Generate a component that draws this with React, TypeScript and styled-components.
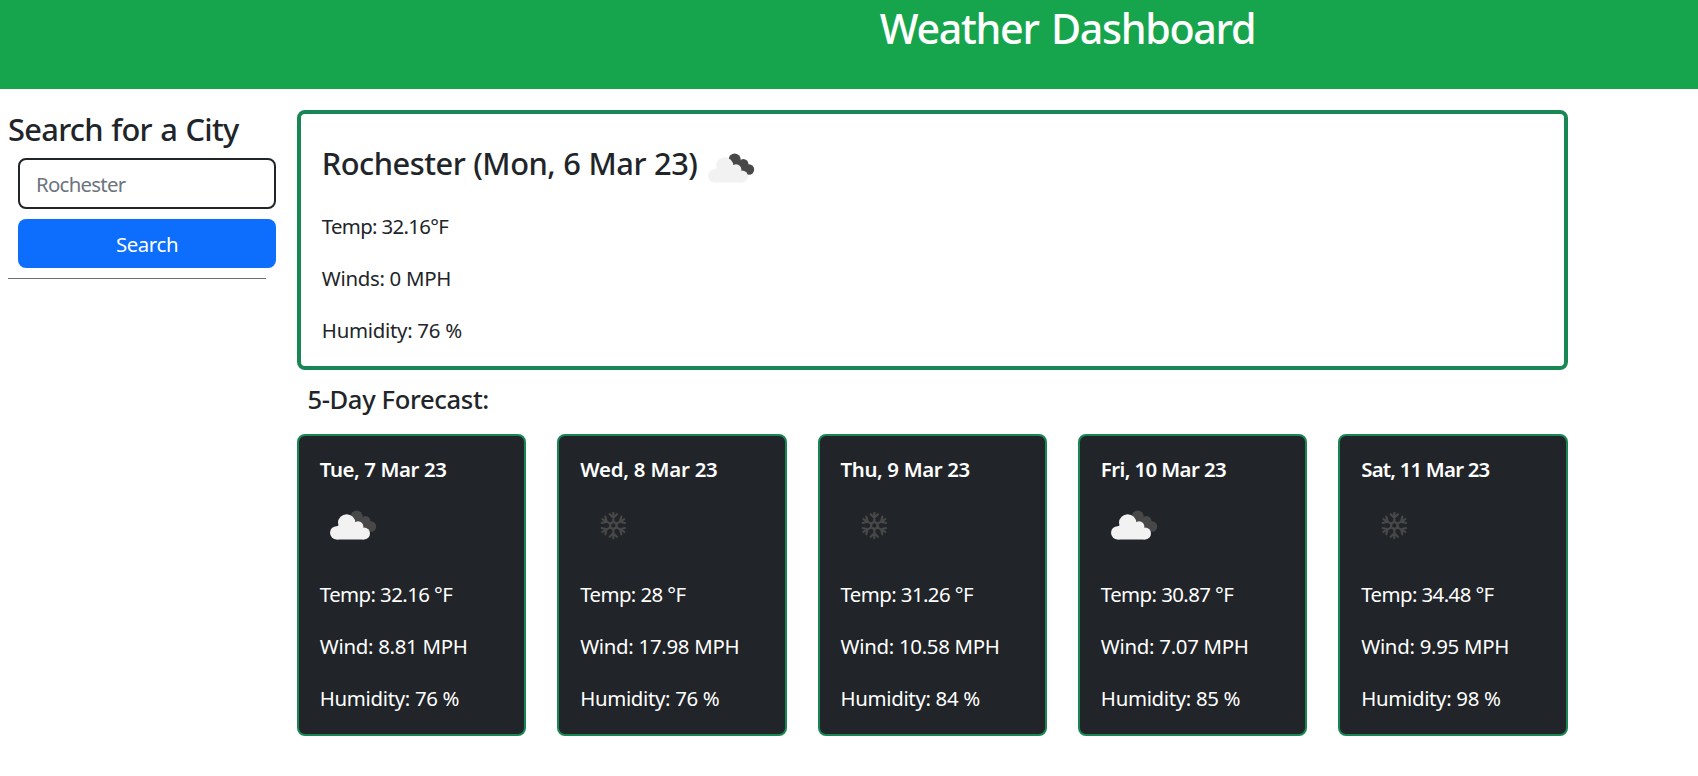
import React from "react";
import styled, { createGlobalStyle } from "styled-components";

const GlobalStyle = createGlobalStyle`
  *, *::before, *::after { box-sizing: border-box; }
  body {
    margin: 0;
    background: #fff;
    color: #212529;
    font-family: "Noto Sans", "Open Sans", sans-serif;
    font-size: 20.4px;
    line-height: 31.2px;
  }
`;

const Header = styled.header`
  height: 89px;
  background: #16a54d;
  color: #fff;
  display: flex;
  justify-content: center;
  padding-left: 437px;
`;

const Title = styled.h1`
  margin: 3px 0 0;
  font-size: 41.2px;
  font-weight: 540;
  line-height: 50px;
  letter-spacing: -1.3px;
  word-spacing: 3px;
`;

const Layout = styled.div`
  display: grid;
  grid-template-columns: 268px 1270.6px;
  column-gap: 21px;
  padding: 21px 0 0 8px;
`;

const Sidebar = styled.aside``;

const SearchTitle = styled.h4`
  margin: 0;
  padding-top: 1px;
  height: 48px;
  font-size: 30.8px;
  font-weight: 500;
  line-height: 37.4px;
  letter-spacing: -0.7px;
  word-spacing: 1px;
`;

const SearchForm = styled.form`
  display: flex;
  flex-direction: column;
  gap: 10px;
  padding-left: 10px;
`;

const CityInput = styled.input`
  height: 51px;
  padding: 0 16px;
  border: 2px solid #212529;
  border-radius: 8px;
  font: inherit;
  letter-spacing: -0.72px;
  background: #fff;
  outline: none;
  &::placeholder { color: #6c757d; opacity: 1; }
`;

const SearchButton = styled.button`
  height: 49px;
  padding: 2px 0 0;
  border: 0;
  border-radius: 8px;
  background: #0d6efd;
  color: #fff;
  font: inherit;
  letter-spacing: -0.39px;
`;

const Divider = styled.hr`
  width: 258px;
  margin: 10px 0 0;
  border: 0;
  border-top: 1px solid #6c6e70;
`;

const Current = styled.section`
  height: 260px;
  padding: 21.5px 20.8px 0;
  border: 4px solid #198754;
  border-radius: 8px;
`;

const CurrentHead = styled.div`
  display: flex;
  align-items: center;
  height: 65px;
  margin-bottom: 10.4px;
`;

const CityName = styled.h4`
  margin: 0;
  padding-bottom: 8px;
  width: 376.5px;
  font-size: 30.8px;
  font-weight: 500;
  line-height: 37.4px;
  letter-spacing: -0.5px;
  word-spacing: 0.6px;
  white-space: nowrap;
`;

const Reading = styled.p<{ $tracking: number }>`
  margin: 0 0 20.8px;
  letter-spacing: ${(p) => p.$tracking}px;
  white-space: nowrap;
`;

const ForecastTitle = styled.h5`
  margin: 13.6px 0 19.2px;
  padding-left: 10.4px;
  font-size: 25.6px;
  font-weight: 500;
  line-height: 31.2px;
  letter-spacing: -0.36px;
`;

const ForecastRow = styled.div`
  display: grid;
  grid-template-columns: repeat(5, 1fr);
  column-gap: 31.2px;
`;

const DayCard = styled.article`
  height: 302px;
  padding: 21px 20.8px 0;
  border: 2px solid #198754;
  border-radius: 8px;
  background: #212529;
  color: #fff;
`;

const DayName = styled.h6<{ $tracking: number }>`
  margin: 0 0 11px;
  font-size: 20.4px;
  font-weight: 600;
  line-height: 25px;
  letter-spacing: ${(p) => p.$tracking}px;
  white-space: nowrap;
`;

const Icon = styled.svg`
  display: block;
  flex: none;
  width: 65px;
  height: 65px;
`;

const DayIcon = styled.div`
  margin-bottom: 21px;
`;

const Clouds = () => (
  <Icon viewBox="30 7.5 195 195">
    <g fill="#484848">
      <circle cx="140" cy="78" r="18" />
      <circle cx="166" cy="92" r="15.5" />
      <circle cx="183" cy="108" r="15.5" />
      <path d="M140 78 166 92 183 108 172 122 140 100z" />
    </g>
    <g fill="#f2f2f2">
      <circle cx="80" cy="127" r="20" />
      <circle cx="110" cy="97" r="26" />
      <circle cx="144" cy="108" r="16" />
      <circle cx="162" cy="129" r="18" />
      <path d="M80 147V108L110 90 144 108 162 120V147z" />
    </g>
  </Icon>
);

const Snow = () => (
  <Icon viewBox="30 7.5 195 195">
    <g fill="none" stroke="#484848" strokeWidth="6.5" strokeLinecap="round">
      {[0, 60, 120, 180, 240, 300].map((angle) => (
        <path key={angle} transform={`rotate(${angle} 130 105)`} d="M130 94V67M119 71 130 82 141 71M123 98 130 94 137 98" />
      ))}
    </g>
  </Icon>
);

type Day = {
  name: string;
  tracking: number;
  sky: "clouds" | "snow";
  temp: string;
  wind: string;
  humidity: string;
};

const days: Day[] = [
  { name: "Tue, 7 Mar 23", tracking: -0.4, sky: "clouds", temp: "32.16", wind: "8.81", humidity: "76" },
  { name: "Wed, 8 Mar 23", tracking: -0.2, sky: "snow", temp: "28", wind: "17.98", humidity: "76" },
  { name: "Thu, 9 Mar 23", tracking: -0.35, sky: "snow", temp: "31.26", wind: "10.58", humidity: "84" },
  { name: "Fri, 10 Mar 23", tracking: -0.6, sky: "clouds", temp: "30.87", wind: "7.07", humidity: "85" },
  { name: "Sat, 11 Mar 23", tracking: -0.8, sky: "snow", temp: "34.48", wind: "9.95", humidity: "98" },
];

export default function App() {
  return (
    <>
      <GlobalStyle />
      <Header>
        <Title>Weather Dashboard</Title>
      </Header>
      <Layout>
        <Sidebar>
          <SearchTitle>Search for a City</SearchTitle>
          <SearchForm>
            <CityInput placeholder="Rochester" />
            <SearchButton type="button">Search</SearchButton>
          </SearchForm>
          <Divider />
        </Sidebar>
        <main>
          <Current>
            <CurrentHead>
              <CityName>Rochester (Mon, 6 Mar 23)</CityName>
              <Clouds />
            </CurrentHead>
            <Reading $tracking={-0.68}>Temp: 32.16°F</Reading>
            <Reading $tracking={-0.3}>Winds: 0 MPH</Reading>
            <Reading $tracking={-0.28}>Humidity: 76 %</Reading>
          </Current>
          <ForecastTitle>5-Day Forecast:</ForecastTitle>
          <ForecastRow>
            {days.map((day) => (
              <DayCard key={day.name}>
                <DayName $tracking={day.tracking}>{day.name}</DayName>
                <DayIcon>{day.sky === "clouds" ? <Clouds /> : <Snow />}</DayIcon>
                <Reading $tracking={-0.58}>Temp: {day.temp} °F</Reading>
                <Reading $tracking={-0.29}>Wind: {day.wind} MPH</Reading>
                <Reading $tracking={-0.33}>Humidity: {day.humidity} %</Reading>
              </DayCard>
            ))}
          </ForecastRow>
        </main>
      </Layout>
    </>
  );
}
